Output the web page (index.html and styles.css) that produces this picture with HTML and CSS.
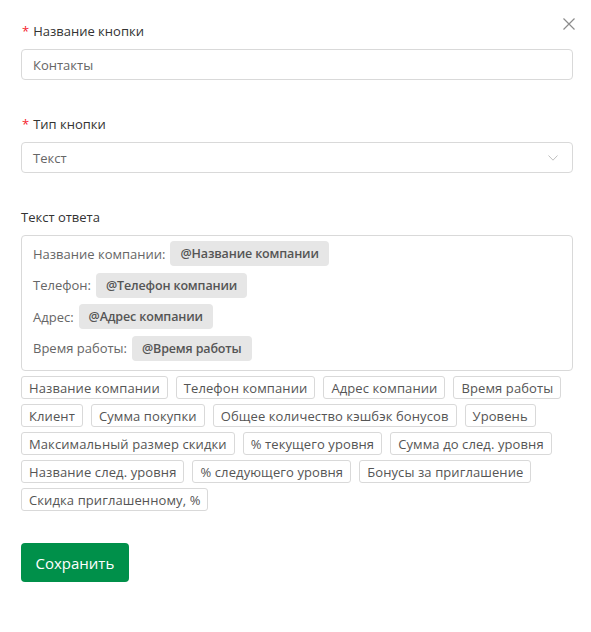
FILE: index.html
```html
<!DOCTYPE html>
<html lang="ru">
<head>
<meta charset="utf-8">
<link rel="stylesheet" href="styles.css">
</head>
<body>
<div class="modal">
  <button class="close" aria-label="Закрыть">
    <svg width="12" height="12" viewBox="0 0 12 12"><path d="M0.5 0.5L11.5 11.5M11.5 0.5L0.5 11.5" stroke="#8c8c8c" stroke-width="1.2" fill="none"/></svg>
  </button>
  <div class="field">
    <div class="label"><span class="req">*</span>Название кнопки</div>
    <div class="input">Контакты</div>
  </div>
  <div class="field">
    <div class="label"><span class="req">*</span>Тип кнопки</div>
    <div class="input select">
      <span>Текст</span>
      <svg width="10" height="6" viewBox="0 0 10 6"><path d="M0.5 0.5L5 5.2L9.5 0.5" stroke="#bfbfbf" stroke-width="1" fill="none"/></svg>
    </div>
  </div>
  <div class="field">
    <div class="label">Текст ответа</div>
    <div class="textarea">
      <div class="line">Название компании:<span class="chip">@Название компании</span></div>
      <div class="line">Телефон:<span class="chip">@Телефон компании</span></div>
      <div class="line">Адрес:<span class="chip">@Адрес компании</span></div>
      <div class="line">Время работы:<span class="chip">@Время работы</span></div>
    </div>
    <div class="tags">
      <span class="tag">Название компании</span>
      <span class="tag">Телефон компании</span>
      <span class="tag">Адрес компании</span>
      <span class="tag">Время работы</span>
      <span class="tag">Клиент</span>
      <span class="tag">Сумма покупки</span>
      <span class="tag">Общее количество кэшбэк бонусов</span>
      <span class="tag">Уровень</span>
      <span class="tag">Максимальный размер скидки</span>
      <span class="tag">% текущего уровня</span>
      <span class="tag">Сумма до след. уровня</span>
      <span class="tag">Название след. уровня</span>
      <span class="tag">% следующего уровня</span>
      <span class="tag">Бонусы за приглашение</span>
      <span class="tag">Скидка приглашенному, %</span>
    </div>
  </div>
  <button class="save">Сохранить</button>
</div>
</body>
</html>
```
FILE: styles.css
```css
html, body {
  margin: 0;
  padding: 0;
  background: #fff;
}
body {
  font-family: "Open Sans", "Liberation Sans", sans-serif;
  font-size: 13px;
  color: #333;
}
.modal {
  position: relative;
  width: 552px;
  padding: 21px 18px 40px 21px;
}
.close {
  position: absolute;
  top: 18px;
  left: 563px;
  width: 12px;
  height: 12px;
  padding: 0;
  border: 0;
  background: none;
  display: flex;
}
.field {
  display: flex;
  flex-direction: column;
  margin-bottom: 34px;
}
.field:last-of-type {
  margin-bottom: 32px;
}
.label {
  line-height: 20px;
  height: 20px;
  margin-bottom: 8px;
  color: #333;
}
.req {
  color: #f5222d;
  margin: 0 4px 0 1px;
}
.input {
  box-sizing: border-box;
  height: 31px;
  border: 1px solid #d9d9d9;
  border-radius: 4px;
  padding: 0 11px;
  display: flex;
  align-items: center;
  color: #666;
}
.select {
  justify-content: space-between;
  padding-right: 14px;
}
.textarea {
  box-sizing: border-box;
  height: 136px;
  border: 1px solid #d9d9d9;
  border-radius: 4px;
  padding: 5px 11px 0;
  display: flex;
  flex-direction: column;
  gap: 6.5px;
  color: #666;
}
.line {
  height: 25px;
  display: flex;
  align-items: center;
  gap: 5px;
}
.chip {
  height: 25px;
  box-sizing: border-box;
  display: inline-flex;
  align-items: center;
  padding: 0 10px;
  background: #e6e6e6;
  border-radius: 4px;
  font-weight: 600;
  font-size: 12.5px;
  letter-spacing: -0.15px;
  color: #555;
}
.tags {
  display: flex;
  flex-wrap: wrap;
  column-gap: 8px;
  row-gap: 5px;
  margin-top: 5px;
}
.tag {
  box-sizing: border-box;
  height: 23px;
  display: inline-flex;
  align-items: center;
  padding: 0 7px;
  border: 1px solid #d9d9d9;
  border-radius: 3px;
  color: #555;
  letter-spacing: 0.1px;
  white-space: nowrap;
}
.save {
  display: block;
  height: 39px;
  padding: 0 14.5px;
  border: 0;
  border-radius: 4px;
  background: #00904a;
  color: #fff;
  font-family: inherit;
  font-size: 15px;
}
```
